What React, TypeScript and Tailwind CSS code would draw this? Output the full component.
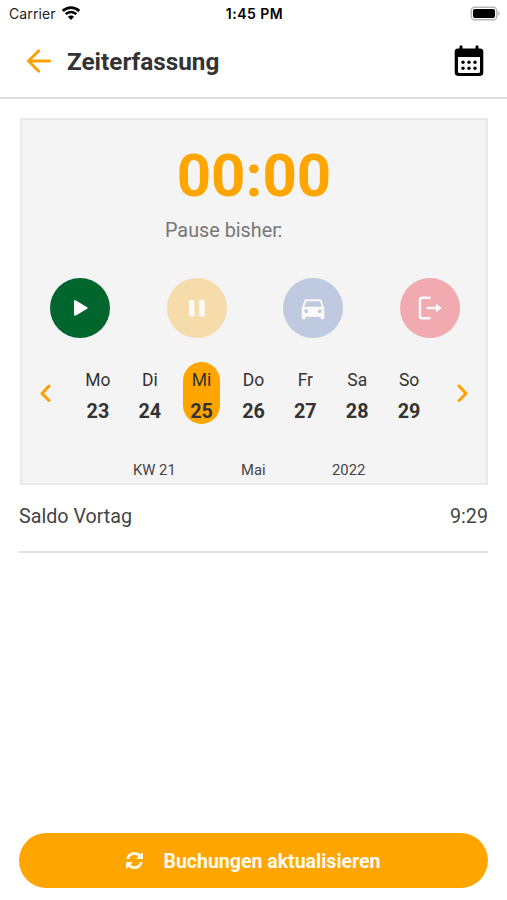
import { MdDirectionsCar } from 'react-icons/md';
import clsx from 'clsx';

const days = [
  { name: 'Mo', date: 23 },
  { name: 'Di', date: 24 },
  { name: 'Mi', date: 25 },
  { name: 'Do', date: 26 },
  { name: 'Fr', date: 27 },
  { name: 'Sa', date: 28 },
  { name: 'So', date: 29 },
];

const selectedDate = 25;

function StatusBar() {
  return (
    <div className="grid h-7 grid-cols-3 items-center pl-[9px] pr-[7px] font-['Inter',sans-serif] text-sm text-[#222]">
      <div className="flex items-center gap-[6px]">
        <span className="tracking-[0.1px]">Carrier</span>
        <svg className="mb-[2px] h-[14px] w-[18px]" viewBox="0 0 18 14" fill="none" stroke="#000">
          <path d="M.8 5a11.6 11.6 0 0 1 16.4 0" strokeWidth="2.8" />
          <path d="M3.7 8.2a7.5 7.5 0 0 1 10.6 0" strokeWidth="2.6" />
          <path d="M9 13.9L5.9 10.8a4.4 4.4 0 0 1 6.2 0z" fill="#000" stroke="none" />
        </svg>
      </div>
      <span className="text-center font-semibold tracking-[0.5px] text-black">1:45 PM</span>
      <svg className="mb-px h-[15px] w-[30px] justify-self-end" viewBox="0 0 30 15">
        <rect x="1.2" y="1.2" width="25.6" height="12.6" rx="3.6" fill="#fff" stroke="#b5b5b5" strokeWidth="1.4" />
        <rect x="3" y="3" width="22" height="9" rx="2" fill="#000" />
        <path d="M28.3 5.3c1.8.8 1.8 3.6 0 4.4z" fill="#a8a8a8" />
      </svg>
    </div>
  );
}

function Header() {
  return (
    <header className="flex h-[71px] items-center border-b-2 border-[#dedede] pb-[2px] pl-[26px] pr-[23px]">
      <svg className="mb-[2px] h-[26px] w-[26px]" viewBox="0 0 26 26" fill="none" stroke="#ffa000" strokeWidth="2.8" strokeLinecap="round" strokeLinejoin="round">
        <path d="M12.8 2.7L2.4 13l10.4 10.3M2.8 13H23.6" />
      </svg>
      <h1 className="ml-[15px] mt-[2px] text-[24.3px] font-bold text-[#333]">Zeiterfassung</h1>
      <svg className="mb-px ml-auto h-8 w-[30px]" viewBox="0 0 30 32">
        <path d="M5.5 3.5V1.8a1.5 1.5 0 0 1 3 0v1.7h13V1.8a1.5 1.5 0 0 1 3 0v1.7H26a3.3 3.3 0 0 1 3.3 3.3v20.8a3.3 3.3 0 0 1-3.3 3.3H4a3.3 3.3 0 0 1-3.3-3.3V6.8A3.3 3.3 0 0 1 4 3.5z" fill="#000" />
        <path d="M4 12h22v14.5a1.5 1.5 0 0 1-1.5 1.5h-19A1.5 1.5 0 0 1 4 26.5z" fill="#fff" />
        {[17.2, 23.2].map((y) => [9, 15, 21].map((x) => <circle key={`${x}-${y}`} cx={x} cy={y} r="1.7" />))}
      </svg>
    </header>
  );
}

function ActionButtons() {
  return (
    <div className="mt-[35px] flex justify-between pl-7 pr-[26px]">
      <button className="flex size-[60px] items-center justify-center rounded-full bg-[#00662e]">
        <svg className="ml-[2px] h-4 w-[14px]" viewBox="0 0 14 16" fill="#fff">
          <path d="M0 1.4C0 .3 1 0 1.9.5l11.2 6.7c.7.4.7 1.2 0 1.6L1.9 15.5C1 16 0 15.7 0 14.6z" />
        </svg>
      </button>
      <button className="flex size-[60px] items-center justify-center rounded-full bg-[#f7dcab]">
        <svg className="h-[18px] w-4" viewBox="0 0 16 18" fill="#fafafa">
          <rect x="0" y="1" width="5.5" height="16.5" rx="1.2" />
          <rect x="10.2" y="1" width="5.5" height="16.5" rx="1.2" />
        </svg>
      </button>
      <button className="flex size-[60px] items-center justify-center rounded-full bg-[#bfc9e0]">
        <MdDirectionsCar className="size-[30px] text-[#fafafa]" />
      </button>
      <button className="flex size-[60px] items-center justify-center rounded-full bg-[#f1abb0]">
        <svg className="h-6 w-6" viewBox="0 0 24 24" fill="none" stroke="#fafafa" strokeWidth="2.4" strokeLinecap="round" strokeLinejoin="round">
          <path d="M11.5 1.7H4a2 2 0 0 0-2 2v16.600a2 2 0 0 0 2 2h7.500M9.500 12h10" />
          <path d="M18.6 8.7v6.6L22.8 12z" fill="#fafafa" strokeWidth="1.2" />
        </svg>
      </button>
    </div>
  );
}

function WeekPicker() {
  return (
    <div className="mt-6 flex items-center justify-between px-[17px]">
      <svg className="h-[18px] w-3" viewBox="0 0 12 18" fill="none" stroke="#ffa000" strokeWidth="3" strokeLinecap="round" strokeLinejoin="round">
        <path d="M10 2L3 9.5l7 7" />
      </svg>
      <div className="mr-px grid w-[363px] grid-cols-7 justify-items-center">
        {days.map((day) => (
          <div
            key={day.date}
            className={clsx(
              'flex h-[62px] w-[37px] flex-col items-center rounded-full pt-[6px] text-[#333]',
              day.date === selectedDate && 'bg-[#ffa500]'
            )}
          >
            <span className="text-[17.5px] leading-6">{day.name}</span>
            <span className="mt-2 text-[19.8px] font-bold leading-6">{day.date}</span>
          </div>
        ))}
      </div>
      <svg className="h-[18px] w-3" viewBox="0 0 12 18" fill="none" stroke="#ffa000" strokeWidth="3" strokeLinecap="round" strokeLinejoin="round">
        <path d="M2 2l7 7.5-7 7" />
      </svg>
    </div>
  );
}

export default function App() {
  return (
    <div className="flex h-[900px] w-[507px] flex-col bg-white font-['Roboto',sans-serif] text-[#444]">
      <StatusBar />
      <Header />

      <main className="flex flex-1 flex-col px-[19px] pb-3">
        <section className="ml-px mt-[19px] h-[367px] border-2 border-[#e9e9e9] bg-[#f4f4f4]">
          <div className="mt-[24px] text-center text-[60px] font-bold leading-[64px] text-[#ffa500]">00:00</div>
          <p className="mt-[11px] pl-[143px] text-[19.8px] leading-6 text-[#777]">
            Pause bishe<span className="tracking-[-1.5px]">r</span>:
          </p>
          <ActionButtons />
          <WeekPicker />
          <div className="mt-[36px] flex text-[14.8px] leading-5">
            <span className="ml-[111px] w-[108px]">KW 21</span>
            <span className="w-[91px]">Mai</span>
            <span>2022</span>
          </div>
        </section>

        <div className="flex h-[68px] items-center justify-between border-b-2 border-[#e2e2e2] pb-[2px] text-[19.7px]">
          <span>Saldo Vortag</span>
          <span>9:29</span>
        </div>

        <button className="mt-auto flex h-[55px] items-center justify-center rounded-full bg-[#ffa500] pt-[3px] text-[19.5px] font-bold text-[#fffaf0]">
          <svg className="mb-[3px] mr-[20px] size-[17px]" viewBox="0 128 1536 1536" fill="currentColor">
            <path d="M1511 1056q0 5-1 7-64 268-268 434.5t-478 166.5q-146 0-282.5-55t-243.5-157l-129 129q-19 19-45 19t-45-19-19-45v-448q0-26 19-45t45-19h448q26 0 45 19t19 45-19 45l-137 137q71 66 161 102t187 36q134 0 250-65t186-179q11-17 53-117 8-23 30-23h192q13 0 22.5 9.5t9.5 22.5zm25-800v448q0 26-19 45t-45 19h-448q-26 0-45-19t-19-45 19-45l138-138q-148-137-349-137-134 0-250 65t-186 179q-11 17-53 117-8 23-30 23h-199q-13 0-22.5-9.5t-9.5-22.5v-7q65-268 270-434.5t480-166.5q146 0 284 55.5t245 156.5l130-129q19-19 45-19t45 19 19 45z" />
          </svg>
          Buchungen aktualisieren
        </button>
      </main>
    </div>
  );
}
